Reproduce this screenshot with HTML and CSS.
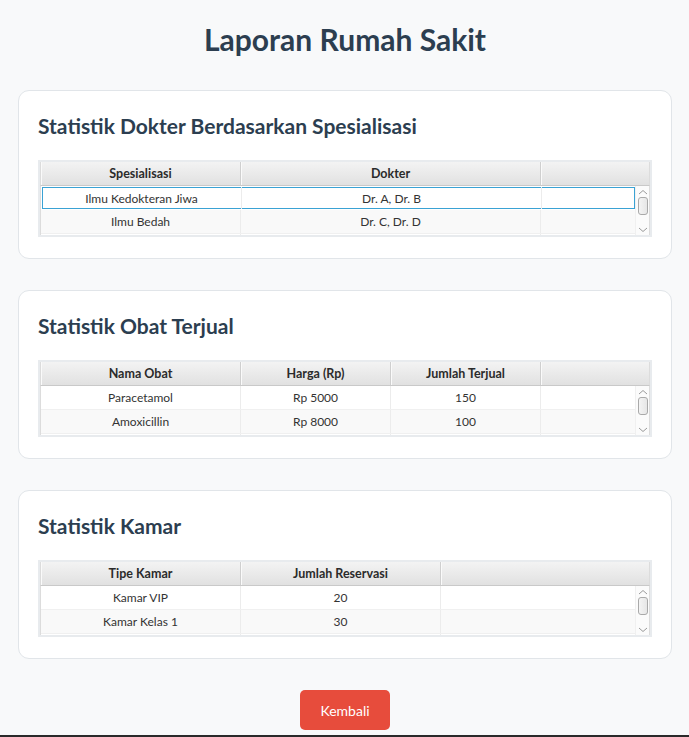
FILE: index.html
```html
<!DOCTYPE html>
<html lang="id">
<head>
<meta charset="utf-8">
<title>Laporan Rumah Sakit</title>
<link rel="stylesheet" href="styles.css">
</head>
<body>
<div class="page">
  <h1 class="title">Laporan Rumah Sakit</h1>

  <section class="card">
    <h2 class="card-title">Statistik Dokter Berdasarkan Spesialisasi</h2>
    <div class="table t-dokter">
      <div class="thead">
        <div class="th">Spesialisasi</div>
        <div class="th">Dokter</div>
        <div class="th filler"></div>
      </div>
      <div class="tbody">
        <div class="rows">
          <div class="tr selected">
            <div class="td">Ilmu Kedokteran Jiwa</div>
            <div class="td">Dr. A, Dr. B</div>
            <div class="td"></div>
          </div>
          <div class="tr odd">
            <div class="td">Ilmu Bedah</div>
            <div class="td">Dr. C, Dr. D</div>
            <div class="td"></div>
          </div>
          <div class="tr partial">
            <div class="td"></div><div class="td"></div><div class="td"></div>
          </div>
        </div>
        <div class="vscroll">
          <svg class="arrow" width="10" height="6" viewBox="0 0 10 6"><path d="M1 5 L5 1.5 L9 5" fill="none" stroke="#9a9a9a" stroke-width="1"/></svg>
          <div class="thumb"></div>
          <svg class="arrow" width="10" height="6" viewBox="0 0 10 6"><path d="M1 1 L5 4.5 L9 1" fill="none" stroke="#9a9a9a" stroke-width="1"/></svg>
        </div>
      </div>
    </div>
  </section>

  <section class="card">
    <h2 class="card-title">Statistik Obat Terjual</h2>
    <div class="table t-obat">
      <div class="thead">
        <div class="th">Nama Obat</div>
        <div class="th">Harga (Rp)</div>
        <div class="th">Jumlah Terjual</div>
        <div class="th filler"></div>
      </div>
      <div class="tbody">
        <div class="rows">
          <div class="tr">
            <div class="td">Paracetamol</div>
            <div class="td">Rp 5000</div>
            <div class="td">150</div>
            <div class="td"></div>
          </div>
          <div class="tr odd">
            <div class="td">Amoxicillin</div>
            <div class="td">Rp 8000</div>
            <div class="td">100</div>
            <div class="td"></div>
          </div>
          <div class="tr partial">
            <div class="td"></div><div class="td"></div><div class="td"></div><div class="td"></div>
          </div>
        </div>
        <div class="vscroll">
          <svg class="arrow" width="10" height="6" viewBox="0 0 10 6"><path d="M1 5 L5 1.5 L9 5" fill="none" stroke="#9a9a9a" stroke-width="1"/></svg>
          <div class="thumb"></div>
          <svg class="arrow" width="10" height="6" viewBox="0 0 10 6"><path d="M1 1 L5 4.5 L9 1" fill="none" stroke="#9a9a9a" stroke-width="1"/></svg>
        </div>
      </div>
    </div>
  </section>

  <section class="card">
    <h2 class="card-title">Statistik Kamar</h2>
    <div class="table t-kamar">
      <div class="thead">
        <div class="th">Tipe Kamar</div>
        <div class="th">Jumlah Reservasi</div>
        <div class="th filler"></div>
      </div>
      <div class="tbody">
        <div class="rows">
          <div class="tr">
            <div class="td">Kamar VIP</div>
            <div class="td">20</div>
            <div class="td"></div>
          </div>
          <div class="tr odd">
            <div class="td">Kamar Kelas 1</div>
            <div class="td">30</div>
            <div class="td"></div>
          </div>
          <div class="tr partial">
            <div class="td"></div><div class="td"></div><div class="td"></div>
          </div>
        </div>
        <div class="vscroll">
          <svg class="arrow" width="10" height="6" viewBox="0 0 10 6"><path d="M1 5 L5 1.5 L9 5" fill="none" stroke="#9a9a9a" stroke-width="1"/></svg>
          <div class="thumb"></div>
          <svg class="arrow" width="10" height="6" viewBox="0 0 10 6"><path d="M1 1 L5 4.5 L9 1" fill="none" stroke="#9a9a9a" stroke-width="1"/></svg>
        </div>
      </div>
    </div>
  </section>

  <div class="actions">
    <button class="btn-back">Kembali</button>
  </div>
</div>
<div class="edge"></div>
</body>
</html>
```

FILE: styles.css
```css
* { box-sizing: border-box; }

html, body {
  margin: 0;
  padding: 0;
  background: #f8f9fa;
  overflow: hidden;
}

body {
  font-family: Lato, "Open Sans", "Liberation Sans", sans-serif;
  color: #333;
}

.page {
  padding: 21px 17px 0 18px;
  display: flex;
  flex-direction: column;
}

.title {
  margin: 0 0 33px;
  text-align: center;
  font-size: 30px;
  line-height: 36px;
  font-weight: 700;
  color: #2c3e50;
}

.card {
  background: #fff;
  border: 1px solid #e1e5e9;
  border-radius: 11px;
  padding: 21px 19px 21px 19px;
  margin-bottom: 31px;
}

.card-title {
  margin: 0 0 20px;
  font-size: 21px;
  line-height: 28px;
  font-weight: 700;
  color: #2c3e50;
}

.table {
  height: 77px;
  border: 2px solid #e8ebee;
  background: #f4f4f4;
  display: flex;
  flex-direction: column;
  overflow: hidden;
  font-size: 12px;
}

.t-dokter .thead, .t-dokter .tr { grid-template-columns: 200px 300px 1fr; }
.t-obat .thead, .t-obat .tr { grid-template-columns: 200px 150px 150px 1fr; }
.t-kamar .thead, .t-kamar .tr { grid-template-columns: 200px 200px 1fr; }

.thead {
  display: grid;
  height: 24px;
  background: linear-gradient(#f3f3f3, #e1e1e1);
  border-bottom: 1px solid #c9c9c9;
  border-left: 1px solid #dcdcdc;
  border-right: 1px solid #dcdcdc;
}

.th {
  display: flex;
  align-items: center;
  justify-content: center;
  font-weight: 700;
  font-size: 12.5px;
  color: #2b2b2b;
  border-right: 1px solid #cfcfcf;
  box-shadow: inset 1px 0 0 #fafafa;
}

.th.filler { border-right: none; }

.tbody {
  flex: 1;
  display: flex;
  min-height: 0;
  background: #fff;
  border-left: 1px solid #dcdcdc;
  border-right: 1px solid #dcdcdc;
}

.rows {
  flex: 1;
  display: flex;
  flex-direction: column;
  min-width: 0;
}

.tr {
  display: grid;
  height: 24px;
  flex: none;
  background: #fff;
  border-bottom: 1px solid #f0f0f0;
}

.tr.odd { background: #f9f9f9; }

.tr.selected {
  box-shadow: inset 0 0 0 1px #3aa2d4;
  margin: 1px 0 0 1px;
  height: 22px;
  border-bottom: none;
}

.tr.selected + .tr { margin-top: 1px; }

.td {
  display: flex;
  align-items: center;
  justify-content: center;
  border-right: 1px solid #ececec;
  color: #333;
  white-space: nowrap;
}

.td:last-child { border-right: none; }

.vscroll {
  width: 14px;
  flex: none;
  display: flex;
  flex-direction: column;
  align-items: center;
  justify-content: space-between;
  padding: 3px 0 2px;
  background: #fbfbfb;
  border-left: 1px solid #f0f0f0;
}

.thumb {
  width: 10px;
  height: 18px;
  border: 1px solid #a9a9a9;
  border-radius: 3px;
  background: linear-gradient(90deg, #f4f4f4, #e6e6e6);
  margin-bottom: 10px;
}

.arrow { display: block; }

.actions {
  display: flex;
  justify-content: center;
  margin-top: 0;
}

.btn-back {
  width: 90px;
  height: 40px;
  border: none;
  border-radius: 5px;
  background: #e74c3c;
  color: #fff;
  font-family: Lato, "Open Sans", "Liberation Sans", sans-serif;
  font-size: 14px;
  cursor: pointer;
}

.edge {
  position: fixed;
  left: 0;
  right: 0;
  bottom: 0;
  height: 2px;
  background: #2a2a2a;
}
```
